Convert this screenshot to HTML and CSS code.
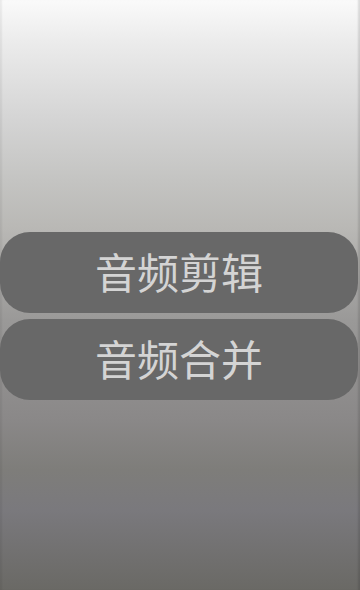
FILE: index.html
```html
<!DOCTYPE html>
<html lang="zh">
<head>
<meta charset="utf-8">
<title>音频</title>
<link rel="stylesheet" href="styles.css">
</head>
<body>
<main class="screen">
  <div class="menu">
    <button class="pill">音频剪辑</button>
    <button class="pill">音频合并</button>
  </div>
</main>
</body>
</html>
```
FILE: styles.css
```css
html, body {
  margin: 0;
  padding: 0;
}
body {
  width: 360px;
  height: 590px;
  overflow: hidden;
  font-family: "Noto Sans CJK SC", "Noto Sans", sans-serif;
}
.screen {
  width: 360px;
  height: 590px;
  box-sizing: border-box;
  padding-top: 232px;
  background: linear-gradient(to bottom,
    #fafafa 0px,
    #ececec 40px,
    #d4d4d4 120px,
    #c4c4c2 180px,
    #b9b8b5 228px,
    #9a9998 320px,
    #8a8888 420px,
    #7e7d7a 470px,
    #7a797d 510px,
    #6a6965 590px);
  box-shadow: inset -3px 0 2px -1px rgba(0,0,0,0.12), inset 3px 0 2px -1px rgba(0,0,0,0.06);
}
.menu {
  display: flex;
  flex-direction: column;
  gap: 6px;
  padding-right: 2px;
}
.pill {
  display: flex;
  align-items: center;
  justify-content: center;
  height: 81px;
  width: 358px;
  margin: 0;
  border: none;
  border-radius: 30px;
  background: #686868;
  color: #d4d4d4;
  font-family: "Noto Sans CJK SC", "Noto Sans", sans-serif;
  font-size: 42px;
  font-weight: 400;
  padding: 0 0 3px 0;
  line-height: 1;
}
```
